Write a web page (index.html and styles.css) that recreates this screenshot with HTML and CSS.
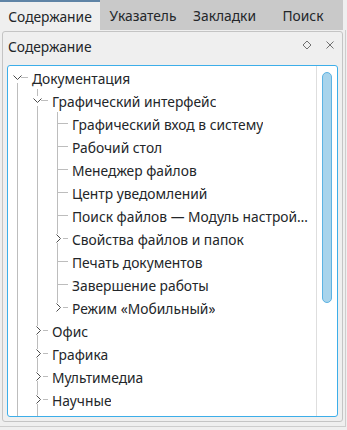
FILE: index.html
```html
<!DOCTYPE html>
<html>
<head>
<meta charset="utf-8">
<link rel="stylesheet" href="styles.css">
</head>
<body>
<div class="tabbar">
  <div class="tab active">Содержание</div>
  <div class="tab t2">Указатель</div>
  <div class="tab t3">Закладки</div>
  <div class="tab t4">Поиск</div>
</div>
<div class="frame">
  <div class="dock">
    <div class="dock-head">
      <span class="title">Содержание</span>
      <span class="btns">
        <svg width="10" height="10" viewBox="0 0 10 10"><path d="M5 1 L9 5 L5 9 L1 5 Z" fill="none" stroke="#707070" stroke-width="1"/></svg>
        <svg width="10" height="10" viewBox="0 0 10 10"><path d="M1.5 1.5 L8.5 8.5 M8.5 1.5 L1.5 8.5" fill="none" stroke="#707070" stroke-width="1"/></svg>
      </span>
    </div>
    <div class="tree">
      <div class="rows">
        <div class="row"><span class="c exp-first"><svg class="dn" width="9" height="5" viewBox="0 0 9 5"><path d="M0.5 0.5 L4.5 4.5 L8.5 0.5"/></svg></span><span class="tx">Документация</span></div>
        <div class="row"><span class="c v"></span><span class="c exp-mid"><svg class="dn" width="9" height="5" viewBox="0 0 9 5"><path d="M0.5 0.5 L4.5 4.5 L8.5 0.5"/></svg></span><span class="tx">Графический интерфейс</span></div>
        <div class="row"><span class="c v"></span><span class="c v"></span><span class="c tee"></span><span class="tx">Графический вход в систему</span></div>
        <div class="row"><span class="c v"></span><span class="c v"></span><span class="c tee"></span><span class="tx">Рабочий стол</span></div>
        <div class="row"><span class="c v"></span><span class="c v"></span><span class="c tee"></span><span class="tx">Менеджер файлов</span></div>
        <div class="row"><span class="c v"></span><span class="c v"></span><span class="c tee"></span><span class="tx">Центр уведомлений</span></div>
        <div class="row"><span class="c v"></span><span class="c v"></span><span class="c tee"></span><span class="tx">Поиск файлов — Модуль настрой…</span></div>
        <div class="row"><span class="c v"></span><span class="c v"></span><span class="c col-mid"><svg class="rt" width="5" height="9" viewBox="0 0 5 9"><path d="M0.5 0.5 L4.5 4.5 L0.5 8.5"/></svg></span><span class="tx">Свойства файлов и папок</span></div>
        <div class="row"><span class="c v"></span><span class="c v"></span><span class="c tee"></span><span class="tx">Печать документов</span></div>
        <div class="row"><span class="c v"></span><span class="c v"></span><span class="c tee"></span><span class="tx">Завершение работы</span></div>
        <div class="row"><span class="c v"></span><span class="c v"></span><span class="c col-last"><svg class="rt" width="5" height="9" viewBox="0 0 5 9"><path d="M0.5 0.5 L4.5 4.5 L0.5 8.5"/></svg></span><span class="tx">Режим «Мобильный»</span></div>
        <div class="row"><span class="c v"></span><span class="c col-mid"><svg class="rt" width="5" height="9" viewBox="0 0 5 9"><path d="M0.5 0.5 L4.5 4.5 L0.5 8.5"/></svg></span><span class="tx">Офис</span></div>
        <div class="row"><span class="c v"></span><span class="c col-mid"><svg class="rt" width="5" height="9" viewBox="0 0 5 9"><path d="M0.5 0.5 L4.5 4.5 L0.5 8.5"/></svg></span><span class="tx">Графика</span></div>
        <div class="row"><span class="c v"></span><span class="c col-mid"><svg class="rt" width="5" height="9" viewBox="0 0 5 9"><path d="M0.5 0.5 L4.5 4.5 L0.5 8.5"/></svg></span><span class="tx">Мультимедиа</span></div>
        <div class="row"><span class="c v"></span><span class="c col-mid"><svg class="rt" width="5" height="9" viewBox="0 0 5 9"><path d="M0.5 0.5 L4.5 4.5 L0.5 8.5"/></svg></span><span class="tx">Научные</span></div>
        <div class="row"><span class="c v"></span><span class="c v"></span></div>
      </div>
      <div class="sb"><div class="handle"></div></div>
    </div>
  </div>
</div>
</body>
</html>
```
FILE: styles.css
```css
:root { --ln: #bdbdbd; }
html, body { margin: 0; padding: 0; }
body {
  width: 347px;
  height: 430px;
  overflow: hidden;
  background: #efefef;
  font-family: "Noto Sans", "DejaVu Sans", sans-serif;
  font-size: 13.8px;
  color: #232629;
}
.tabbar {
  display: flex;
  width: 343px;
  height: 30px;
  background: #c9c9c9;
}
.tab {
  display: flex;
  align-items: center;
  justify-content: center;
  box-sizing: border-box;
  height: 30px;
  padding-top: 1px;
  white-space: nowrap;
}
.tab.active {
  width: 100px;
  background: #efefef;
  border-top: 2px solid #5f84a6;
}
.t2 { width: 86px; }
.t3 { width: 77px; }
.t4 { width: 80px; }

.frame {
  width: 343px;
  height: 395px;
  border-right: 1px solid #cdcdcd;
  border-bottom: 1px solid #cdcdcd;
  padding-top: 1px;
  padding-left: 2px;
  box-sizing: content-box;
}
.dock {
  box-sizing: border-box;
  width: 341px;
  height: 391px;
  border: 1px solid #c4c4c4;
  border-radius: 3px;
  padding: 0 4px 4px 4px;
  display: flex;
  flex-direction: column;
}
.dock-head {
  height: 28px;
  margin-bottom: 5px;
  display: flex;
  align-items: center;
  flex: none;
}
.title { padding-top: 1px; padding-left: 1px; }
.btns {
  margin-left: auto;
  display: flex;
  gap: 13px;
  margin-right: 3px;
  margin-top: -3px;
}
.btns svg { display: block; }
.tree {
  box-sizing: border-box;
  height: 352px;
  border: 1px solid #3daee9;
  border-radius: 3px;
  background: #fff;
  display: flex;
  overflow: hidden;
}
.rows {
  width: 308px;
  flex: none;
  overflow: hidden;
}
.row {
  height: 23px;
  display: flex;
  align-items: center;
}
.c {
  width: 20px;
  height: 23px;
  flex: none;
  display: flex;
  align-items: center;
}
.c svg path { fill: none; stroke: #4a4a4a; stroke-width: 1; }
.dn { margin-left: 5px; margin-top: -1px; }
.rt { margin-left: 8px; }
.v {
  background: linear-gradient(var(--ln), var(--ln)) 9px 0 / 1px 23px no-repeat;
}
.tee {
  background:
    linear-gradient(var(--ln), var(--ln)) 9px 0 / 1px 23px no-repeat,
    linear-gradient(var(--ln), var(--ln)) 10px 11px / 10px 1px no-repeat;
}
.exp-first {
  background:
    linear-gradient(var(--ln), var(--ln)) 9px 17px / 1px 6px no-repeat,
    linear-gradient(var(--ln), var(--ln)) 13px 11px / 7px 1px no-repeat;
}
.exp-mid {
  background:
    linear-gradient(var(--ln), var(--ln)) 9px 0 / 1px 7px no-repeat,
    linear-gradient(var(--ln), var(--ln)) 9px 17px / 1px 6px no-repeat,
    linear-gradient(var(--ln), var(--ln)) 13px 11px / 7px 1px no-repeat;
}
.col-mid {
  background:
    linear-gradient(var(--ln), var(--ln)) 9px 0 / 1px 7px no-repeat,
    linear-gradient(var(--ln), var(--ln)) 9px 16px / 1px 7px no-repeat,
    linear-gradient(var(--ln), var(--ln)) 15px 11px / 5px 1px no-repeat;
}
.col-last {
  background:
    linear-gradient(var(--ln), var(--ln)) 9px 0 / 1px 7px no-repeat,
    linear-gradient(var(--ln), var(--ln)) 15px 11px / 5px 1px no-repeat;
}
.tx {
  padding-left: 4px;
  white-space: nowrap;
  overflow: hidden;
  min-width: 0;
  padding-top: 1px;
}
.sb {
  flex: none;
  width: 20px;
  border-left: 1px solid #dedede;
}
.handle {
  box-sizing: border-box;
  margin: 6px 0 0 5px;
  width: 10px;
  height: 231px;
  border: 1px solid #5cb3e3;
  border-radius: 5px;
  background: #a8d4ec;
}
```
